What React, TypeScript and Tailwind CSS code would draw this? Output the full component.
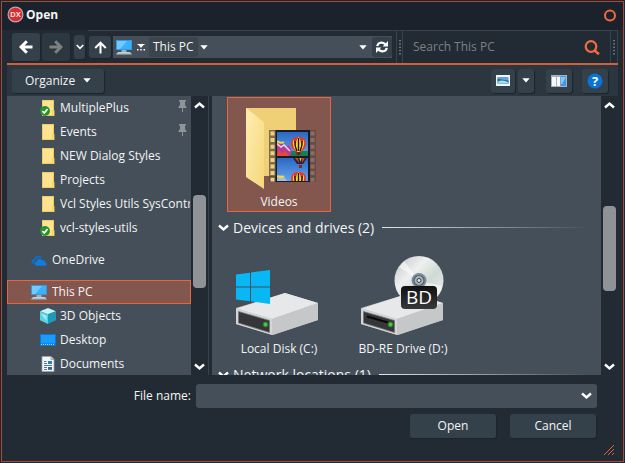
import React from 'react';
import { clsx } from 'clsx';

type IconProps = { className?: string };

// ── Small glyphs ────────────────────────────

const Caret: React.FC = () => (
    <svg width="8" height="5" viewBox="0 0 8 5" fill="#fff" aria-hidden="true">
        <path d="M.3.3h7.4L4 4.600z" />
    </svg>
);

const Chevron: React.FC<IconProps> = ({ className }) => (
    <svg width="11" height="8" viewBox="0 0 11 8" fill="none" stroke="#fff" strokeWidth="2.4" className={className} aria-hidden="true">
        <path d="M1 1.5l4.5 4L10 1.5" />
    </svg>
);

const Grip: React.FC = () => (
    <svg width="2" height="15" viewBox="0 0 2 15" aria-hidden="true">
        <path d="M1 0v15" stroke="#c3c7ca" strokeWidth="1" strokeDasharray="1.3 2" />
    </svg>
);

const LogoIcon: React.FC = () => (
    <svg width="18" height="18" viewBox="0 0 18 18" aria-hidden="true">
        <circle cx="9.500" cy="8.500" r="7.4" fill="#dc2b31" stroke="#b9a6aa" strokeWidth="1.2" />
        <text x="9.500" y="11.2" textAnchor="middle" fontSize="7.5" fontWeight="700" fill="#ffe5e2" fontFamily="Liberation Sans, sans-serif">DX</text>
    </svg>
);

const ArrowIcon: React.FC<IconProps> = ({ className }) => (
    <svg width="14" height="14" viewBox="0 0 14 14" fill="none" strokeWidth="3" className={className} aria-hidden="true">
        <path d="M13.5 7H3M7.8 1.2L2 7l5.8 5.8" />
    </svg>
);

const UpIcon: React.FC = () => (
    <svg width="13" height="13" viewBox="0 0 13 13" fill="none" stroke="#fff" strokeWidth="2" aria-hidden="true">
        <path d="M6.5 12.500V2M1.200 7l5.3-5.300L11.800 7" />
    </svg>
);

const RefreshIcon: React.FC = () => (
    <svg width="12" height="12" viewBox="0 0 12 12" fill="none" stroke="#fff" strokeWidth="2.200" aria-hidden="true">
        <path d="M1.300 5.200C1.800 1.300 6.500.6 9.400 3.400M10.700 6.800C10.200 10.700 5.500 11.400 2.600 8.600" />
        <path d="M12 0v5.400H6.600zM0 12V6.600h5.400z" fill="#fff" stroke="none" />
    </svg>
);

const ComputerIcon: React.FC = () => (
    <svg width="16" height="16" viewBox="0 0 16 16" aria-hidden="true">
        <path d="M0 1h16v10H0z" fill="#2f9be8" />
        <path d="M1 2h14v8H1z" fill="#3db0fb" />
        <path d="M1 2h10L4 10H1z" fill="#70ccff" />
        <path d="M5.500 11h5v2h-5z" fill="#a3b2bd" />
        <path d="M2 13h12l2 2.500H0z" fill="#c5cdd2" />
        <path d="M0 14.800h16v1H0z" fill="#7a8a96" />
    </svg>
);

const FolderIcon: React.FC<{ synced?: boolean }> = ({ synced }) => (
    <svg width="16" height="16" viewBox="0 0 16 16" aria-hidden="true">
        <path d="M2 0h12v16H2z" fill="#f0ca5c" />
        <path d="M3 1h10v14H3z" fill="#ffe391" />
        <path d="M12 10h2.500v6H12z" fill="#f2cb56" />
        <path d="M12.600 11h1v4h-1z" fill="#ffe391" />
        {synced && (
            <g>
                <circle cx="5" cy="11" r="5" fill="#27932c" />
                <path d="M2.400 11.200l1.900 1.800 3.300-4" fill="none" stroke="#fff" strokeWidth="1.700" />
            </g>
        )}
    </svg>
);

const PinIcon: React.FC = () => (
    <svg width="9" height="12" viewBox="0 0 9 12" fill="#8e9498" aria-hidden="true">
        <path d="M1 0h7v1.500H7V5l1.500 2v1H5v4H4V8H.5V7L2 5V1.500H1z" />
    </svg>
);

const OneDriveIcon: React.FC = () => (
    <svg width="17" height="11" viewBox="0 0 17 11" aria-hidden="true">
        <path d="M.5 8C0 5.500 1.600 4.200 3.200 4 4-.1 9.500-1 11.500 2.600L9.800 3C7.500 1.800 5.200 3.200 5 5.400 3.200 5.700 2.600 7.800 3.200 9.400 1.600 9.500.7 9 .5 8z" fill="#0b6fc9" />
        <path d="M4 8.500C4 7 5 6.200 6.200 6.200 6.500 3 11 2.600 12 5.400c2-.4 3.100.7 3 2.200 2.300.3 2.200 3.200.2 3.400H6.500C5 11 4 10 4 8.500z" fill="#0f7cdf" />
    </svg>
);

const CubeIcon: React.FC = () => (
    <svg width="16" height="16" viewBox="0 0 16 16" aria-hidden="true">
        <path d="M8 0l8 3.300L8 6.200 0 3.300z" fill="#c5f4fa" />
        <path d="M0 3.300l8 2.900V16l-8-3.800z" fill="#59d0e4" />
        <path d="M16 3.300L8 6.200V16l8-3.800z" fill="#1f9ab7" />
        <path d="M1.500 5.500L6.500 8v5l-5-6.500z" fill="#a6ecf5" />
    </svg>
);

const DesktopIcon: React.FC = () => (
    <svg width="16" height="16" viewBox="0 0 16 16" aria-hidden="true">
        <path d="M0 2h16v12H0z" fill="#0d76d8" />
        <path d="M1 3h14v8.500H1z" fill="#189dfd" />
        <path d="M1 12.500h14" stroke="#a9d8fb" strokeWidth="1" strokeDasharray="1 1" />
    </svg>
);

const DocumentIcon: React.FC = () => (
    <svg width="16" height="16" viewBox="0 0 16 16" aria-hidden="true">
        <path d="M2 .5h9L14 3.500v12H2z" fill="#f4f6f7" stroke="#9ba4aa" strokeWidth=".8" />
        <path d="M11 .5v3h3" fill="#c9d0d5" stroke="#8f999f" strokeWidth=".7" />
        <path d="M4 5.500h2.500M4 7.500h3M4 9.500h8M4 11.500h3M4 13.500h3" stroke="#4a7ba5" strokeWidth="1" />
        <path d="M8 5h4v3H8z" fill="#2980bf" />
        <path d="M8 11h4v2.800H8z" fill="#31648c" />
    </svg>
);

// ── Large tile pictures ─────────────────────

const Balloon: React.FC<{ x: number; y: number }> = ({ x, y }) => (
    <g transform={`translate(${x} ${y})`}>
        <path d="M0 6.500C0 2.700 3.200 0 7.500 0S15 2.700 15 6.500c0 3.500-3 6.500-5.500 9h-4C3 13 0 10 0 6.500z" fill="#e8352a" />
        <path d="M2.500 2.500C1 5.500 2 10 5 14L3.500 7zM7.500 0C4 4 4.500 11 6.500 15h2c2-4 2.500-11-1-15zM12.500 2.500C14 5.500 13 10 10 14l1.500-7z" fill="#f8d72e" />
        <path d="M4 4c-.5 4 1 8 2 10M11 4c.5 4-1 8-2 10M7.500 1v13" stroke="#1d1713" strokeWidth="1.300" fill="none" />
        <path d="M5.500 15h4v3h-4z" fill="#7c2118" />
    </g>
);

const VideosIcon: React.FC = () => (
    <svg width="76" height="82" viewBox="-4 0 76 82" aria-hidden="true">
        <defs>
            <linearGradient id="folder-front" x1="0" x2="1" y1="0" y2="1">
                <stop offset="0" stopColor="#ffeeb0" />
                <stop offset="1" stopColor="#f5d77b" />
            </linearGradient>
            <linearGradient id="sky" x1="0" x2="0" y1="0" y2="1">
                <stop offset="0" stopColor="#2b67c4" />
                <stop offset="1" stopColor="#67a4e8" />
            </linearGradient>
            <clipPath id="frame-top"><path d="M32 24h31v24H32z" /></clipPath>
            <clipPath id="frame-bottom"><path d="M32 50h31v23H32z" /></clipPath>
        </defs>
        <path d="M1 0h50v68H19z" fill="#efd077" />
        <path d="M1 0l18 14v67L1 69z" fill="url(#folder-front)" />
        <path d="M24 22h47v52H24z" fill="#544b45" fillOpacity=".75" />
        <path d="M27.500 23.500v50" stroke="#efd17c" strokeWidth="4" strokeDasharray="4 2.600" />
        <path d="M67.500 23.500v50" stroke="#986860" strokeWidth="4" strokeDasharray="4 2.600" />
        <path d="M30.500 22H65v52H30.500z" fill="#171d25" />
        <path d="M32 24h31v24H32z" fill="url(#sky)" />
        <path d="M32 50h31v23H32z" fill="url(#sky)" />
        <g clipPath="url(#frame-top)">
            <path d="M31 43h32v5H31z" fill="#16804a" />
            <path d="M31 37l5-3 5 5 3-2 3 6-2 5H31z" fill="#b63c91" />
            <path d="M31 35l5 4 3-2 6 6" stroke="#e8d9f0" strokeWidth="1.500" fill="none" />
            <path d="M31 48l3-6 3 4 3-3 4 5" fill="#e84a34" />
            <path d="M32 33q4 3 7 1" stroke="#f2dc3d" strokeWidth="2" fill="none" />
            <Balloon x={46} y={29} />
        </g>
        <g clipPath="url(#frame-bottom)">
            <path d="M48 50h14l-4 6h-6z" fill="#242536" />
            <path d="M50 50h3l1 5zM57 50h3l-3 5z" fill="#d93e30" />
            <path d="M54.500 50h2l-1 4z" fill="#f2cf35" />
            <path d="M54 57h3v3h-3z" fill="#8b2425" />
            <path d="M31 71l4-4 5 3 3 4H31z" fill="#aabbd9" />
            <path d="M32 68q4 2 7 0" stroke="#f2dc3d" strokeWidth="2" fill="none" />
            <Balloon x={46} y={64} />
        </g>
    </svg>
);

const DriveBody: React.FC<{ slot?: boolean }> = ({ slot }) => (
    <g>
        <path d="M0 53L49 38l33 10v17L37 80 0 69z" fill="#c2c2c5" />
        <path d="M1 53.500L49 38l33 10-46 16z" fill="#e7e8e9" />
        <path d="M36 64l46-16v17L36 80z" fill="#c6c7c9" />
        <path d="M0 53.500L36 64v16L0 69z" fill="#d5d4d8" />
        <path d="M2.500 56.500L33.500 65.500v12L2.500 68z" fill="#353637" stroke="#777" strokeWidth=".8" />
        {slot && <path d="M6 61.500l21 6" stroke="#090909" strokeWidth="2" />}
        <circle cx="29.500" cy="69.500" r="1.900" fill="#42dc42" />
        <circle cx="29.500" cy="69.500" r="3" fill="#35b335" fillOpacity=".4" />
    </g>
);

const LocalDiskIcon: React.FC = () => (
    <svg width="86" height="82" viewBox="0 0 86 82" aria-hidden="true">
        <DriveBody />
        <path d="M0 19.500L14 17.700V31.500H0zM15 17.500L34 15v16.500H15zM0 32.500h14v13.800L0 44.500zM15 32.500h19V49l-19-2.600z" fill="#08b8f5" />
    </svg>
);

const DiscDriveIcon: React.FC = () => (
    <svg width="84" height="82" viewBox="0 0 84 82" aria-hidden="true">
        <defs>
            <linearGradient id="disc" x1="0" x2="1" y1="0" y2="1">
                <stop offset="0" stopColor="#bdc1c2" />
                <stop offset=".35" stopColor="#eef0ef" />
                <stop offset=".6" stopColor="#cfd9d3" />
                <stop offset="1" stopColor="#f4f3ee" />
            </linearGradient>
            <linearGradient id="badge" x1="0" x2="0" y1="0" y2="1">
                <stop offset="0" stopColor="#111" />
                <stop offset="1" stopColor="#393939" />
            </linearGradient>
        </defs>
        <DriveBody slot />
        <circle cx="58" cy="25.500" r="24.500" fill="url(#disc)" />
        <path d="M58 25.500L38 12l5-6zM58 25.500L78 39l3-8z" fill="#fff" fillOpacity=".5" />
        <circle cx="58" cy="25.500" r="7.500" fill="#7e8d99" />
        <circle cx="58" cy="25.500" r="5" fill="#a9b3ba" stroke="#53616e" strokeWidth="1.200" />
        <circle cx="58" cy="25.500" r="2" fill="#e2e5e6" stroke="#34414d" strokeWidth="1" />
        <rect x="40" y="31" width="36" height="23" rx="4" fill="url(#badge)" />
        <text x="58" y="49" textAnchor="middle" fontSize="19" fill="#fff" fontFamily="Open Sans, sans-serif">BD</text>
    </svg>
);

// ── Data ────────────────────────────────────

const QUICK_ACCESS = [
    { name: 'MultiplePlus', synced: true, pinned: true },
    { name: 'Events', synced: false, pinned: true },
    { name: 'NEW Dialog Styles', synced: false, pinned: false },
    { name: 'Projects', synced: false, pinned: false },
    { name: 'Vcl Styles Utils SysControls', synced: false, pinned: false },
    { name: 'vcl-styles-utils', synced: true, pinned: false },
];

const PC_FOLDERS = [
    { name: '3D Objects', icon: <CubeIcon /> },
    { name: 'Desktop', icon: <DesktopIcon /> },
    { name: 'Documents', icon: <DocumentIcon /> },
];

// ── Building blocks ─────────────────────────

interface TreeItemProps {
    icon: React.ReactNode;
    label: string;
    root?: boolean;
    selected?: boolean;
    pinned?: boolean;
}

const TreeItem: React.FC<TreeItemProps> = ({ icon, label, root, selected, pinned }) => (
    <button
        type="button"
        className={clsx(
            'flex h-6 w-full items-center border text-left',
            root ? 'gap-[5px] pl-[23px]' : 'gap-1 pl-8',
            selected ? 'border-[#e9653b] bg-[#84574e]' : 'border-transparent'
        )}
    >
        <span className="flex w-4 shrink-0 justify-center">{icon}</span>
        <span className="min-w-0 flex-1 overflow-hidden whitespace-nowrap">{label}</span>
        {pinned && <span className="mr-[3px] mb-1 shrink-0"><PinIcon /></span>}
    </button>
);

interface ScrollBarProps {
    name: string;
    before: string;
    thumb: string;
}

const ScrollBar: React.FC<ScrollBarProps> = ({ name, before, thumb }) => (
    <div className="flex w-[17px] shrink-0 flex-col items-center bg-[#222b34]">
        <button type="button" aria-label={`Scroll ${name} up`} className="flex h-[17px] w-full items-center justify-center">
            <Chevron className="rotate-180" />
        </button>
        <div className="flex min-h-0 w-full flex-1 flex-col items-center">
            <div className={before} />
            <div className={clsx('w-[13px] rounded-sm bg-[#8f9397]', thumb)} />
        </div>
        <button type="button" aria-label={`Scroll ${name} down`} className="flex h-[17px] w-full items-center justify-center">
            <Chevron />
        </button>
    </div>
);

const GroupHeader: React.FC<{ title: string }> = ({ title }) => (
    <div className="flex h-8 items-center pr-3 pb-px pl-[6px]">
        <button type="button" className="flex items-center gap-1 text-[14px] whitespace-nowrap">
            <Chevron />
            <span>{title}</span>
        </button>
        <div className="ml-2 h-px flex-1 bg-linear-to-r from-[#e3e5e6] to-transparent" />
    </div>
);

const Tile: React.FC<{ icon: React.ReactNode; label: string; selected?: boolean }> = ({ icon, label, selected }) => (
    <button
        type="button"
        className={clsx(
            'flex h-[115px] w-[104px] shrink-0 flex-col items-center justify-end border pb-px',
            selected ? 'border-[#e9653b] bg-[#84574e]' : 'border-transparent'
        )}
    >
        {icon}
        <span className="mt-1 leading-4 whitespace-nowrap">{label}</span>
    </button>
);

const raised = 'flex items-center justify-center rounded-[3px] shadow-[1px_1px_1px_#1c252d]';
const raisedFill = 'bg-[#35414a]';

export default function App() {
    return (
        <div className="h-screen bg-[#1b2731] p-px font-['Open_Sans',sans-serif] text-[12px] text-[#f2f4f5]">
            <div className="flex h-full flex-col overflow-hidden border border-[#a64b38] bg-[#222b34]">
                {/* Title bar */}
                <header className="flex h-7 shrink-0 items-center bg-[#1b222b] pr-[6px] pb-[2px] pl-1">
                    <LogoIcon />
                    <h1 className="ml-[2px] flex-1 font-bold">Open</h1>
                    <button type="button" aria-label="Close">
                        <svg width="13" height="13" viewBox="0 0 13 13" aria-hidden="true">
                            <circle cx="6" cy="6.500" r="5" fill="none" stroke="#f26a3d" strokeWidth="2" />
                        </svg>
                    </button>
                </header>

                {/* Navigation */}
                <nav className="mx-[5px] flex h-[33px] shrink-0 items-center pl-[5px]">
                    <button type="button" aria-label="Back" className={clsx(raised, raisedFill, 'h-7 w-7')}><ArrowIcon className="stroke-white" /></button>
                    <button type="button" aria-label="Forward" disabled className={clsx(raised, 'ml-[2px] h-7 w-7 bg-[#2c3740]')}><ArrowIcon className="rotate-180 stroke-[#7f8180]" /></button>
                    <button type="button" aria-label="Recent locations" className={clsx(raised, raisedFill, 'ml-1 h-6 w-[11px]')}>
                        <svg width="8" height="6" viewBox="0 0 8 6" fill="none" stroke="#fff" strokeWidth="1.600" aria-hidden="true"><path d="M.8 1L4 4.300 7.200 1" /></svg>
                    </button>
                    <div className="ml-[3px] flex h-full min-w-0 flex-1 items-center border-t border-[#37434c] pr-1 pl-px">
                        <button type="button" aria-label="Up" className={clsx(raised, raisedFill, 'h-[22px] w-[22px]')}><UpIcon /></button>
                        <div className="ml-[2px] flex h-[22px] min-w-0 flex-1 items-center bg-[#454f59] pl-[3px]">
                            <ComputerIcon />
                            <button type="button" aria-label="Locations" className="ml-[5px]">
                                <svg width="8" height="7" viewBox="0 0 8 7" fill="#fff" aria-hidden="true">
                                    <path d="M.5 0h7v1H6.500L4 4 1.500 1h-1zM0 5h1.500v1.500H0zM3.300 5h1.500v1.500H3.300zM6.500 5H8v1.500H6.500z" />
                                </svg>
                            </button>
                            <button type="button" className="ml-1 h-5 rounded-[3px] bg-[#3a454e] px-1 whitespace-nowrap">This PC</button>
                            <button type="button" aria-label="This PC folders" className="ml-[2px]"><Caret /></button>
                            <button type="button" aria-label="Previous locations" className="mr-[5px] ml-auto"><Caret /></button>
                            <button type="button" aria-label="Refresh" className={clsx('flex h-5 w-5 items-center justify-center rounded-[3px]', raisedFill)}><RefreshIcon /></button>
                        </div>
                    </div>
                    <div className="flex h-full w-[222px] shrink-0 items-center border border-b-0 border-[#37434c]">
                        <span className="flex w-[5px] justify-center"><Grip /></span>
                        <div className="flex h-full min-w-0 flex-1 items-center border-x border-[#37434c] pr-[10px] pl-[10px]">
                            <input type="search" aria-label="Search This PC" placeholder="Search This PC" className="min-w-0 flex-1 bg-transparent outline-none placeholder:text-[#7b8084]" />
                            <button type="button" aria-label="Search">
                                <svg width="16" height="15" viewBox="0 0 16 15" fill="none" stroke="#f26a3d" strokeWidth="2.200" aria-hidden="true">
                                    <circle cx="7" cy="6.500" r="5.300" />
                                    <path d="M10 10l5 4.200" strokeWidth="2.600" />
                                </svg>
                            </button>
                        </div>
                        <span className="flex w-[6px] justify-center"><Grip /></span>
                    </div>
                </nav>
                <div className="mx-[5px] h-[2px] shrink-0 bg-[#cb613f]" />

                {/* Command bar */}
                <div className="mx-[5px] flex h-[31px] shrink-0 items-center bg-[#2b363f] pr-[10px] pl-[5px]">
                    <button type="button" className={clsx(raised, raisedFill, 'h-6 gap-2 px-[13px]')}>
                        Organize
                        <Caret />
                    </button>
                    <button type="button" aria-label="Change view" className={clsx(raised, raisedFill, 'ml-auto h-6 w-6')}>
                        <svg width="14" height="11" viewBox="0 0 14 11" aria-hidden="true">
                            <path d="M0 0h14v11H0z" fill="#f3f5f6" />
                            <path d="M1.500 2h11v6.500h-11z" fill="#5aa5e6" />
                            <path d="M1.500 3.500l4 1 7 1v3h-11z" fill="#276c8e" />
                            <path d="M1.500 7q5-3 11 .5v1h-11z" fill="#a8dbed" />
                        </svg>
                    </button>
                    <button type="button" aria-label="More views" className={clsx(raised, raisedFill, 'ml-[3px] h-6 w-4')}><Caret /></button>
                    <button type="button" aria-label="Preview pane" className={clsx(raised, raisedFill, 'ml-3 h-6 w-[26px]')}>
                        <svg width="16" height="12" viewBox="0 0 16 12" aria-hidden="true">
                            <path d="M0 0h16v12H0z" fill="#aab3b9" />
                            <path d="M1 2h4v9H1zM6 2h3v9H6z" fill="#f7f9fa" />
                            <path d="M9.500 1H15v10H9.500z" fill="#3e98e5" />
                            <path d="M10 2h5L11 9h-1z" fill="#8ac5f4" />
                        </svg>
                    </button>
                    <button type="button" aria-label="Help" className={clsx(raised, raisedFill, 'ml-[10px] h-6 w-[26px]')}>
                        <svg width="16" height="16" viewBox="0 0 16 16" aria-hidden="true">
                            <circle cx="8" cy="8" r="7.500" fill="#0873d8" />
                            <text x="8" y="12.500" textAnchor="middle" fontSize="13" fontWeight="700" fill="#fff" fontFamily="Open Sans, sans-serif">?</text>
                        </svg>
                    </button>
                </div>

                {/* Folder tree and file list */}
                <main className="mx-[5px] flex min-h-0 flex-1">
                    <aside className="flex w-[201px] shrink-0 bg-[#454f59]">
                        <div className="min-w-0 flex-1 overflow-hidden">
                            {QUICK_ACCESS.map(folder => (
                                <TreeItem key={folder.name} icon={<FolderIcon synced={folder.synced} />} label={folder.name} pinned={folder.pinned} />
                            ))}
                            <div className="my-2"><TreeItem root icon={<OneDriveIcon />} label="OneDrive" /></div>
                            <TreeItem root selected icon={<ComputerIcon />} label="This PC" />
                            {PC_FOLDERS.map(folder => (
                                <TreeItem key={folder.name} icon={folder.icon} label={folder.name} />
                            ))}
                        </div>
                        <ScrollBar name="folders" before="h-[82px]" thumb="h-[93px]" />
                    </aside>
                    <div className="mr-[3px] w-px shrink-0 bg-[#37434c]" />
                    <section className="flex min-w-0 flex-1 bg-[#454f59]">
                        <div className="min-w-0 flex-1 overflow-hidden pt-px">
                            <div className="pl-[15px]"><Tile selected icon={<VideosIcon />} label="Videos" /></div>
                            <GroupHeader title="Devices and drives (2)" />
                            <div className="flex gap-5 pl-[15px]">
                                <Tile icon={<LocalDiskIcon />} label="Local Disk (C:)" />
                                <Tile icon={<DiscDriveIcon />} label="BD-RE Drive (D:)" />
                            </div>
                            <GroupHeader title="Network locations (1)" />
                        </div>
                        <ScrollBar name="files" before="h-[93px]" thumb="h-[85px]" />
                    </section>
                </main>

                {/* File name and actions */}
                <footer className="shrink-0 px-[5px] pt-[9px] pb-[6px]">
                    <div className="flex items-center pr-[21px]">
                        <label htmlFor="file-name" className="w-[189px] shrink-0 pr-[5px] text-right">File name:</label>
                        <div className="flex h-6 min-w-0 flex-1 items-center rounded-[3px] bg-[#454f59] pr-[5px]">
                            <input id="file-name" type="text" className="min-w-0 flex-1 bg-transparent px-2 outline-none" />
                            <button type="button" aria-label="Recent file names"><Chevron /></button>
                        </div>
                    </div>
                    <div className="mt-[6px] flex justify-end gap-[14px] pr-[22px]">
                        <button type="button" className={clsx(raised, raisedFill, 'h-6 w-[86px]')}>Open</button>
                        <button type="button" className={clsx(raised, raisedFill, 'h-6 w-[86px]')}>Cancel</button>
                    </div>
                    <div className="mt-[7px] flex justify-end pr-1">
                        <svg width="10" height="10" viewBox="0 0 10 10" stroke="#e0643c" strokeWidth="1" aria-hidden="true">
                            <path d="M0 10L10 0M4 10l6-6M8 10l2-2" />
                        </svg>
                    </div>
                </footer>
            </div>
        </div>
    );
}
